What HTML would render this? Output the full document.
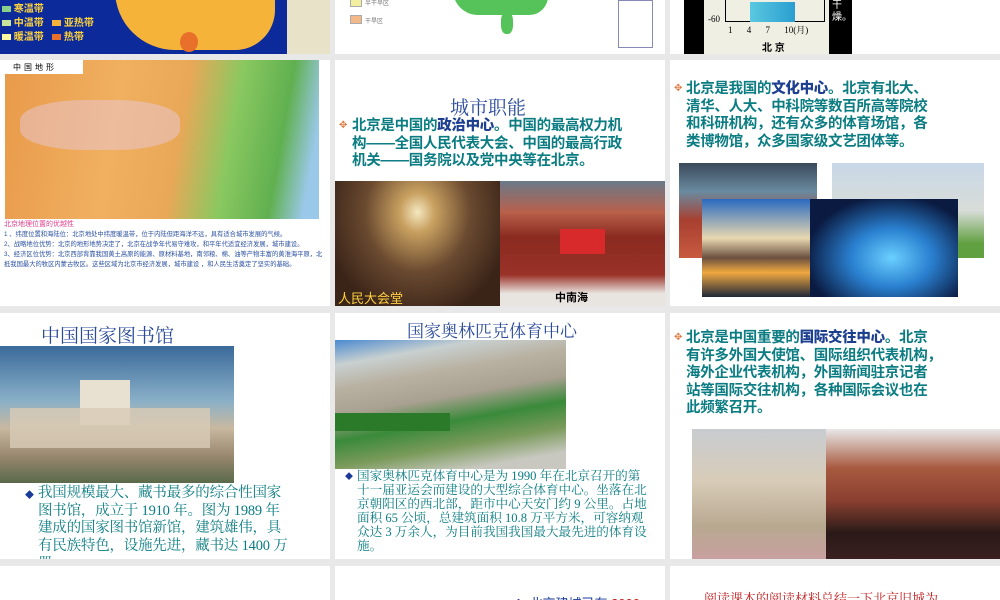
<!DOCTYPE html>
<html><head><meta charset="utf-8"><style>
*{margin:0;padding:0;box-sizing:border-box}
body{width:1000px;height:600px;background:#e8e8e8;position:relative;overflow:hidden;font-family:"Liberation Sans","Noto Sans CJK SC",sans-serif}
.s{position:absolute;background:#fff;overflow:hidden}
.a{position:absolute}
.bt{color:#0a7c82;font-weight:bold;font-size:14.5px;line-height:17.5px;white-space:nowrap;letter-spacing:-0.3px}
.bt b{color:#1d3f8f}
.ser{font-family:"Liberation Serif","Noto Serif CJK SC",serif}
</style></head><body>
<!-- row1 -->
<div class="s" style="left:0;top:0;width:330px;height:54px;background:#0c2a9a">
 <div class="a" style="left:115px;top:-10px;width:160px;height:60px;background:#f6b33a;border-radius:0 0 40px 60px"></div>
 <div class="a" style="left:180px;top:32px;width:18px;height:20px;background:#e8702a;border-radius:50%"></div>
 <div class="a" style="left:255px;top:5px;width:10px;height:20px;background:#f6b33a;border-radius:50%"></div>
 <div class="a" style="left:287px;top:0;width:43px;height:54px;background:#e8e2c8"></div>
 <div class="a" style="left:2px;top:3px;font-size:10px;color:#ffd33a;font-weight:bold;line-height:14px">
  <div><span style="display:inline-block;width:9px;height:6px;background:#8bd08a"></span> 寒温带</div>
  <div><span style="display:inline-block;width:9px;height:6px;background:#c8e49a"></span> 中温带 &nbsp;&nbsp;<span style="display:inline-block;width:9px;height:6px;background:#f6b33a"></span> 亚热带</div>
  <div><span style="display:inline-block;width:9px;height:6px;background:#fff8a0"></span> 暖温带 &nbsp;&nbsp;<span style="display:inline-block;width:9px;height:6px;background:#e8702a"></span> 热带</div>
 </div>
</div>
<div class="s" style="left:335px;top:0;width:330px;height:54px">
 <div class="a" style="left:15px;top:-2px;width:12px;height:9px;background:#f2f0a0;border:1px solid #aaa"></div>
 <div class="a" style="left:30px;top:-2px;font-size:6px;color:#777">半干旱区</div>
 <div class="a" style="left:15px;top:15px;width:12px;height:9px;background:#f2b88a;border:1px solid #aaa"></div>
 <div class="a" style="left:30px;top:16px;font-size:6px;color:#777">干旱区</div>
 <div class="a" style="left:118px;top:-10px;width:95px;height:25px;background:#55c25a;border-radius:0 0 30px 40px"></div>
 <div class="a" style="left:166px;top:12px;width:12px;height:22px;background:#55c25a;border-radius:40%"></div>
 <div class="a" style="left:283px;top:0;width:35px;height:48px;border:1px solid #8888b8"></div>
</div>
<div class="s" style="left:670px;top:0;width:330px;height:54px">
 <div class="a" style="left:14px;top:0;width:168px;height:54px;background:#000"></div>
 <div class="a" style="left:34px;top:0;width:125px;height:54px;background:#efefe4"></div>
 <div class="a" style="left:55px;top:0;width:100px;height:22px;border:1px solid #000;border-top:none"></div>
 <div class="a" style="left:80px;top:2px;width:45px;height:20px;background:linear-gradient(90deg,#5ac8e0,#2a9ed0)"></div>
 <div class="a ser" style="left:38px;top:14px;font-size:9px">-60</div>
 <div class="a ser" style="left:58px;top:23px;font-size:9px;word-spacing:12px">1 4 7 10(月)</div>
 <div class="a" style="left:92px;top:39px;font-size:10px;font-weight:bold">北 京</div>
 <div class="a" style="left:162px;top:0;font-size:10px;color:#fff;width:12px;line-height:12px">干燥。</div>
</div>
<!-- row2 -->
<div class="s" style="left:0;top:60px;width:330px;height:246px">
 <div class="a" style="left:5px;top:0;width:314px;height:159px;background:linear-gradient(100deg,#e89a4a 0%,#f0b060 35%,#e8a858 55%,#8ac860 70%,#60b050 85%,#9ac8e8 95%)"></div>
 <div class="a" style="left:5px;top:0;width:78px;height:14px;background:#fff;font-size:8px;padding:2px 8px;letter-spacing:3px">中国地形</div>
 <div class="a" style="left:20px;top:40px;width:160px;height:50px;background:#e8c8d8;opacity:.5;border-radius:40%"></div>
 <div class="a" style="left:4px;top:159px;font-size:7px;color:#e04090">北京地理位置的优越性</div>
 <div class="a" style="left:4px;top:170px;font-size:6.3px;color:#2a50a0;line-height:10px;width:322px">1 、纬度位置和海陆位：北京地处中纬度暖温带，位于内陆但距海洋不远，具有适合城市发展的气候。<br>2、战略地位优势：北京的地形地势决定了，北京在战争年代易守难攻，和平年代适宜经济发展，城市建设。<br>3、经济区位优势：北京西部背靠我国黄土高原的能源、原材料基地，南邻粮、棉、油等产物丰富的黄淮海平原，北抵我国最大的牧区内蒙古牧区。这些区域为北京市经济发展，城市建设 ，和人民生活奠定了坚实的基础。</div>
</div>
<div class="s" style="left:335px;top:60px;width:330px;height:246px">
 <div class="a ser" style="left:115px;top:33px;font-size:19px;color:#2a4a9a">城市职能</div>
 <div class="a" style="left:4px;top:60px;color:#e07a40;font-size:10px">✥</div>
 <div class="a bt" style="left:17px;top:58px">北京是中国的<b>政治中心</b>。中国的最高权力机<br>构——全国人民代表大会、中国的最高行政<br>机关——国务院以及党中央等在北京。</div>
 <div class="a" style="left:0;top:121px;width:165px;height:125px;background:radial-gradient(ellipse at 50% 25%,#f4e8c0 0%,#c8a060 15%,#6a4a30 45%,#3a2418 80%)"></div>
 <div class="a" style="left:3px;top:228px;font-size:13px;color:#ffd040">人民大会堂</div>
 <div class="a" style="left:165px;top:121px;width:165px;height:125px;background:linear-gradient(180deg,#6a7a8a 0%,#b8604a 25%,#8a2a20 45%,#9a3228 75%,#e8e4e0 90%)"></div>
 <div class="a" style="left:225px;top:169px;width:45px;height:25px;background:#d82a2a"></div>
 <div class="a" style="left:220px;top:229px;font-size:11px;font-weight:bold">中南海</div>
</div>
<div class="s" style="left:670px;top:60px;width:330px;height:246px">
 <div class="a" style="left:4px;top:23px;color:#e07a40;font-size:10px">✥</div>
 <div class="a bt" style="left:16px;top:21px">北京是我国的<b>文化中心</b>。北京有北大、<br>清华、人大、中科院等数百所高等院校<br>和科研机构，还有众多的体育场馆，各<br>类博物馆，众多国家级文艺团体等。</div>
 <div class="a" style="left:9px;top:103px;width:138px;height:95px;background:linear-gradient(180deg,#3a4a5a,#6a8aa0 30%,#a84030 60%,#c85a40)"></div>
 <div class="a" style="left:162px;top:103px;width:152px;height:95px;background:linear-gradient(180deg,#c8d8e8,#d8dcd8 50%,#60a040 85%)"></div>
 <div class="a" style="left:32px;top:139px;width:108px;height:98px;background:linear-gradient(180deg,#2a6ac0,#e8d8b0 40%,#6a5040 60%,#f0a840 75%,#202838)"></div>
 <div class="a" style="left:140px;top:139px;width:148px;height:98px;background:radial-gradient(ellipse at 55% 60%,#6ad0ff 0%,#2a80d0 35%,#0a1a40 75%)"></div>
</div>
<!-- row3 -->
<div class="s" style="left:0;top:313px;width:330px;height:246px">
 <div class="a ser" style="left:41px;top:8px;font-size:19px;color:#2a4a9a">中国国家图书馆</div>
 <div class="a" style="left:0;top:33px;width:234px;height:137px;background:linear-gradient(180deg,#3a6a9a 0%,#8ab0c8 40%,#c8b8a0 60%,#9a8870 80%,#5a6a4a)"></div>
 <div class="a" style="left:80px;top:67px;width:50px;height:45px;background:#e8e0d0"></div>
 <div class="a" style="left:10px;top:95px;width:200px;height:40px;background:#d8ccb8;opacity:.8"></div>
 <div class="a" style="left:25px;top:175px;color:#1a3a9a;font-size:9px">◆</div>
 <div class="a ser" style="left:38px;top:172px;font-size:14.5px;line-height:17.7px;color:#0a7c82;white-space:nowrap;letter-spacing:-0.2px">我国规模最大、藏书最多的综合性国家<br>图书馆，成立于 1910 年。图为 1989 年<br>建成的国家图书馆新馆，建筑雄伟，具<br>有民族特色，设施先进，藏书达 1400 万<br>册</div>
</div>
<div class="s" style="left:335px;top:313px;width:330px;height:246px">
 <div class="a ser" style="left:72px;top:4px;font-size:17px;color:#2a4a9a">国家奥林匹克体育中心</div>
 <div class="a" style="left:0;top:27px;width:231px;height:129px;background:linear-gradient(170deg,#4a8ad0 0%,#c8d0d0 15%,#b8b0a0 30%,#a8a090 45%,#3a8a3a 60%,#7a9a5a 75%,#c8c8c0 90%)"></div>
 <div class="a" style="left:0;top:100px;width:115px;height:18px;background:#2a7a2a"></div>
 <div class="a" style="left:10px;top:158px;color:#1a3a9a;font-size:8px">◆</div>
 <div class="a ser" style="left:22px;top:156px;font-size:12.6px;line-height:14px;color:#0a7c82;white-space:nowrap;letter-spacing:0px">国家奥林匹克体育中心是为 1990 年在北京召开的第<br>十一届亚运会而建设的大型综合体育中心。坐落在北<br>京朝阳区的西北部，距市中心天安门约 9 公里。占地<br>面积 65 公顷，总建筑面积 10.8 万平方米，可容纳观<br>众达 3 万余人，为目前我国我国最大最先进的体育设<br>施。</div>
</div>
<div class="s" style="left:670px;top:313px;width:330px;height:246px">
 <div class="a" style="left:4px;top:19px;color:#e07a40;font-size:10px">✥</div>
 <div class="a bt" style="left:16px;top:17px">北京是中国重要的<b>国际交往中心</b>。北京<br>有许多外国大使馆、国际组织代表机构，<br>海外企业代表机构，外国新闻驻京记者<br>站等国际交往机构，各种国际会议也在<br>此频繁召开。</div>
 <div class="a" style="left:22px;top:116px;width:134px;height:130px;background:linear-gradient(180deg,#c8ccd0,#d8ccb8 40%,#b8a890 75%,#c8a0a0)"></div>
 <div class="a" style="left:156px;top:116px;width:174px;height:130px;background:linear-gradient(180deg,#e8e8e8 0%,#a85a40 30%,#8a4030 55%,#2a1a18 80%,#3a2020)"></div>
</div>
<!-- row4 -->
<div class="s" style="left:0;top:566px;width:330px;height:34px"></div>
<div class="s" style="left:335px;top:566px;width:330px;height:34px">
 <div class="a" style="left:180px;top:27px;font-size:13px;color:#1a3a9a;white-space:nowrap">1. 北京建城已有 <span style="color:#c02020">3000</span></div>
</div>
<div class="s" style="left:670px;top:566px;width:330px;height:34px">
 <div class="a ser" style="left:34px;top:22px;font-size:13px;color:#c02020;white-space:nowrap">阅读课本的阅读材料总结一下北京旧城为</div>
</div>
</body></html>
